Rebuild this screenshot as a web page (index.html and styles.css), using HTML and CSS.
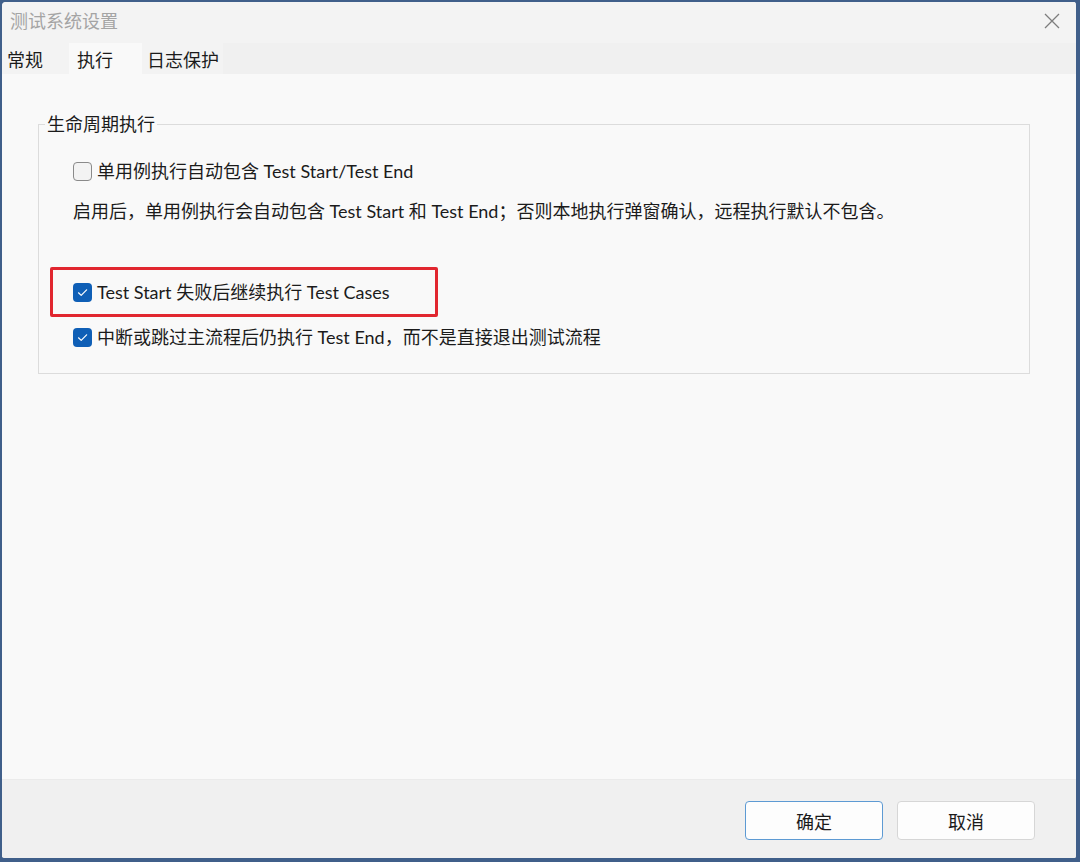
FILE: index.html
```html
<!DOCTYPE html>
<html lang="zh-CN">
<head>
<meta charset="utf-8">
<title>测试系统设置</title>
<link rel="stylesheet" href="styles.css">
</head>
<body>
<div class="window">
  <div class="titlebar">
    <span class="title">测试系统设置</span>
    <svg class="close" width="16" height="16" viewBox="0 0 16 16"><path d="M1 1 L15 15 M15 1 L1 15" stroke="#7d7d7d" stroke-width="1.3" fill="none"/></svg>
  </div>
  <div class="tabs">
    <div class="tab">常规</div>
    <div class="tab active">执行</div>
    <div class="tab">日志保护</div>
  </div>
  <div class="panel">
    <fieldset class="group">
      <legend>生命周期执行</legend>
      <label class="row first">
        <span class="box"></span>
        <span class="text">单用例执行自动包含 Test Start/Test End</span>
      </label>
      <p class="desc">启用后，单用例执行会自动包含 Test Start 和 Test End；否则本地执行弹窗确认，远程执行默认不包含。</p>
      <div class="highlight">
        <label class="row">
          <span class="box checked"><svg width="19" height="19" viewBox="0 0 19 19"><path d="M5.5 9.8 L8.2 12.4 L13.6 6.8" stroke="#ffffff" stroke-width="1.2" fill="none" stroke-linecap="round" stroke-linejoin="round"/></svg></span>
          <span class="text">Test Start 失败后继续执行 Test Cases</span>
        </label>
      </div>
      <label class="row last">
        <span class="box checked"><svg width="19" height="19" viewBox="0 0 19 19"><path d="M5.5 9.8 L8.2 12.4 L13.6 6.8" stroke="#ffffff" stroke-width="1.2" fill="none" stroke-linecap="round" stroke-linejoin="round"/></svg></span>
        <span class="text">中断或跳过主流程后仍执行 Test End，而不是直接退出测试流程</span>
      </label>
    </fieldset>
  </div>
  <div class="footer">
    <button class="btn primary">确定</button>
    <button class="btn">取消</button>
  </div>
</div>
</body>
</html>
```

FILE: styles.css
```css
html, body {
  margin: 0;
  padding: 0;
  background: #405f8a;
}
body {
  font-family: Lato, "Noto Sans CJK SC", sans-serif;
  font-size: 18px;
  color: #1b1b1b;
}
.window {
  width: 1080px;
  height: 862px;
  box-sizing: border-box;
  border-style: solid;
  border-color: #405f8a;
  border-width: 2px 4px 4px 2px;
  border-radius: 6px;
  display: flex;
  flex-direction: column;
  background: #f0f0f0;
  overflow: hidden;
}
.titlebar {
  height: 41px;
  flex: none;
  display: flex;
  align-items: center;
  justify-content: space-between;
  padding: 0 16px 0 8px;
  background: #f3f3f3;
}
.title {
  color: #a4a4a4;
  font-size: 18px;
  line-height: 24px;
  margin-top: -3px;
}
.close {
  margin-top: -4px;
}
.tabs {
  height: 31px;
  flex: none;
  display: flex;
  align-items: stretch;
  background: #f0f0f0;
}
.tab {
  min-width: 58px;
  padding: 4px 4px 0 5px;
  line-height: 26px;
  background: #f3f3f3;
  box-sizing: content-box;
}
.tab.active {
  min-width: 61px;
  padding-left: 8px;
  background: #f9f9f9;
}
.panel {
  flex: 1;
  background: #f9f9f9;
  border-bottom: 1px solid #ebebeb;
  padding: 38px 46px 0 36px;
}
.group {
  margin: 0;
  padding: 0 0 24px 0;
  border: 1px solid #dcdcdc;
  min-width: 0;
}
.group legend {
  margin-left: 6px;
  padding: 0 2px;
  line-height: 24px;
}
.row {
  display: flex;
  align-items: center;
  gap: 5px;
  line-height: 24px;
  margin-left: 34px;
}
.row.first {
  margin-top: 23px;
}
.row.last {
  margin-top: 8px;
}
.box {
  width: 19px;
  height: 19px;
  box-sizing: border-box;
  border: 1px solid #8a8a8a;
  border-radius: 4px;
  background: #f3f3f3;
  display: block;
  flex: none;
}
.box.checked {
  border: none;
  background: #0f5fb6;
}
.box svg {
  display: block;
}
.desc {
  margin: 16px 0 0 34px;
  line-height: 24px;
}
.highlight {
  margin: 44px 0 0 11px;
  width: 388px;
  box-sizing: border-box;
  border: 3px solid #e1262f;
  border-radius: 2px;
  padding: 10px 0 10px 0;
}
.highlight .row {
  margin-left: 20px;
}
.footer {
  height: 78px;
  flex: none;
  display: flex;
  justify-content: flex-end;
  align-items: flex-start;
  gap: 14px;
  padding: 21px 41px 0 0;
  box-sizing: border-box;
  background: #f0f0f0;
}
.btn {
  width: 138px;
  height: 39px;
  font-family: Lato, "Noto Sans CJK SC", sans-serif;
  font-size: 18px;
  color: #1b1b1b;
  background: #fdfdfd;
  border: 1px solid #d6d6d6;
  border-radius: 4px;
  padding: 0;
}
.btn.primary {
  border: 1.5px solid #5d9ad3;
}
```
